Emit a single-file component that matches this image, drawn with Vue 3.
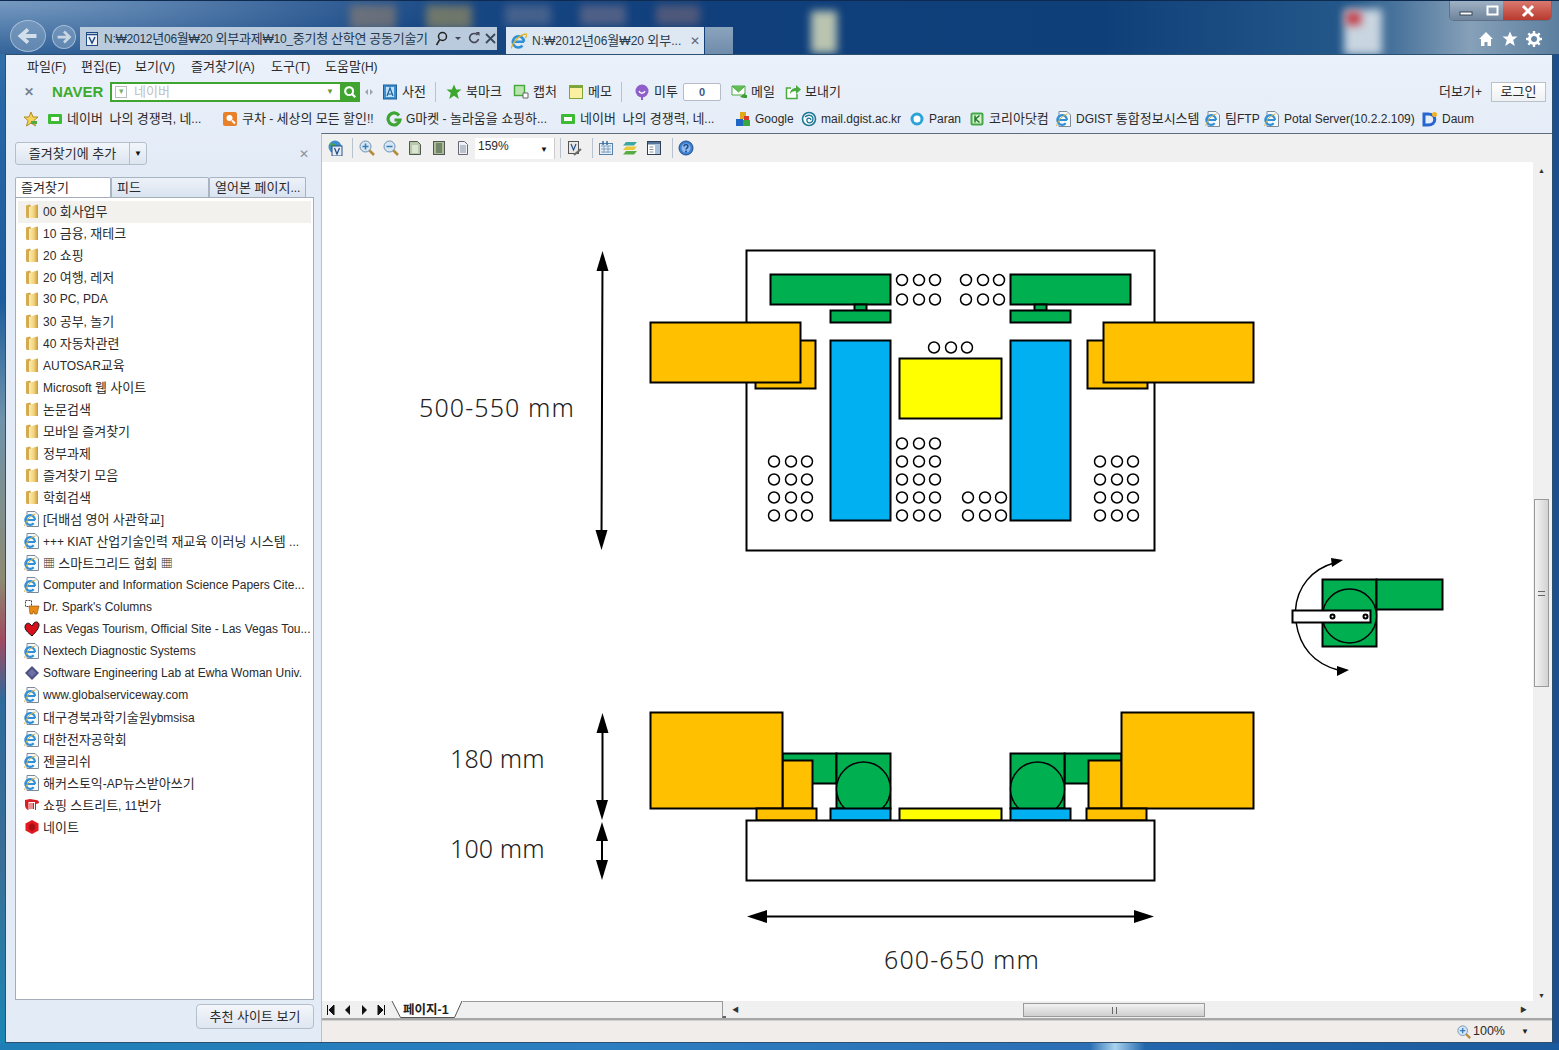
<script setup>
const runs = s => s.split(/([\uAC00-\uD7A3]+)/).filter(Boolean).map(t => ({ t, ko: /[\uAC00-\uD7A3]/.test(t) }))

const withWidths = (items, end) =>
  items.map((it, i) => ({ ...it, w: (i + 1 < items.length ? items[i + 1].x : end) - it.x }))

const menus = [
  { t: '파일(F)', w: 54 }, { t: '편집(E)', w: 54 }, { t: '보기(V)', w: 56 },
  { t: '즐겨찾기(A)', w: 80 }, { t: '도구(T)', w: 54 }, { t: '도움말(H)', w: 60 }
]

const naverTools = withWidths([
  { x: 382, i: 'dict', t: '사전' }, { x: 435, sep: true },
  { x: 446, i: 'gstar', t: '북마크' }, { x: 513, i: 'capture', t: '캡처' },
  { x: 568, i: 'memo', t: '메모' }, { x: 621, sep: true },
  { x: 634, i: 'me2', t: '미투' }, { x: 683, count: '0' },
  { x: 731, i: 'gmail', t: '메일' }, { x: 785, i: 'send', t: '보내기' }
], 845)

const favs = withWidths([
  { x: 23, i: 'favstar' },
  { x: 47, i: 'nv', t: '네이버  나의 경쟁력, 네...' },
  { x: 222, i: 'coupang', t: '쿠차 - 세상의 모든 할인!!' },
  { x: 386, i: 'gm', t: 'G마켓 - 놀라움을 쇼핑하...' },
  { x: 560, i: 'nv', t: '네이버  나의 경쟁력, 네...' },
  { x: 735, i: 'google', t: 'Google' },
  { x: 801, i: 'atom', t: 'mail.dgist.ac.kr' },
  { x: 909, i: 'paran', t: 'Paran' },
  { x: 969, i: 'kor', t: '코리아닷컴' },
  { x: 1056, i: 'ie', t: 'DGIST 통합정보시스템' },
  { x: 1205, i: 'ie', t: '팀FTP' },
  { x: 1264, i: 'ie', t: 'Potal Server(10.2.2.109)' },
  { x: 1422, i: 'daum', t: 'Daum' }
], 1490)

const docTools = withWidths([
  { x: 327, i: 'vglobe' }, { x: 352, sep: true }, { x: 359, i: 'zin' }, { x: 383, i: 'zout' },
  { x: 407, i: 'pg1' }, { x: 431, i: 'pg2' }, { x: 455, i: 'pg3' }, { x: 475, select: '159%' },
  { x: 560, sep: true }, { x: 566, i: 'vpen' }, { x: 592, sep: true }, { x: 598, i: 'cal' },
  { x: 622, i: 'layers' }, { x: 646, i: 'panel' }, { x: 672, sep: true }, { x: 678, i: 'help' }
], 700)

const favorites = [
  ['folder', '00 회사업무'], ['folder', '10 금융, 재테크'], ['folder', '20 쇼핑'], ['folder', '20 여행, 레저'],
  ['folder', '30 PC, PDA'], ['folder', '30 공부, 놀기'], ['folder', '40 자동차관련'], ['folder', 'AUTOSAR교육'],
  ['folder', 'Microsoft 웹 사이트'], ['folder', '논문검색'], ['folder', '모바일 즐겨찾기'], ['folder', '정부과제'],
  ['folder', '즐겨찾기 모음'], ['folder', '학회검색'], ['ie', '[더배섬 영어 사관학교]'],
  ['ie', '+++ KIAT 산업기술인력 재교육 이러닝 시스템 ...'], ['ie', '▦ 스마트그리드 협회 ▦'],
  ['ie', 'Computer and Information Science Papers Cite...'], ['spark', "Dr. Spark's Columns"],
  ['heart', 'Las Vegas Tourism, Official Site - Las Vegas Tou...'], ['ie', 'Nextech Diagnostic Systems'],
  ['diamond', 'Software Engineering Lab at Ewha Woman Univ.'], ['ie', 'www.globalserviceway.com'],
  ['ie', '대구경북과학기술원ybmsisa'], ['ie', '대한전자공학회'], ['ie', '젠글리쉬'],
  ['ie', '해커스토익-AP뉴스받아쓰기'], ['st11', '쇼핑 스트리트, 11번가'], ['nate', '네이트']
]

const box = (c, x1, y1, x2, y2) => ({ c, x: x1, y: y1, w: x2 - x1, h: y2 - y1 })

const topShapes = [
  box('white', 746.5, 250.5, 1154.5, 550.5),
  box('green', 770.5, 274.5, 890.5, 304.5), box('green', 854.5, 304.5, 866.5, 310.5), box('green', 830.5, 310.5, 890.5, 322.5),
  box('green', 1010.5, 274.5, 1130.5, 304.5), box('green', 1034.5, 304.5, 1046.5, 310.5), box('green', 1010.5, 310.5, 1070.5, 322.5),
  box('orange', 755.5, 340.5, 815.5, 388.5), box('orange', 650.5, 322.5, 800.5, 382.5),
  box('orange', 1087.5, 340.5, 1147.5, 388.5), box('orange', 1103.5, 322.5, 1253.5, 382.5),
  box('blue', 830.5, 340.5, 890.5, 520.5), box('blue', 1010.5, 340.5, 1070.5, 520.5),
  box('yellow', 899.5, 358.5, 1001.5, 418.5)
]

const dots = (xs, ys) => ys.flatMap(y => xs.map(x => ({ x, y })))
const holes = [
  ...dots([902, 919, 935], [280, 299.5]), ...dots([966, 983, 999], [280, 299.5]),
  ...dots([934, 951, 967], [347.5]),
  ...dots([902, 919, 935], [443.5, 461.5, 479.5, 497.5, 515.5]),
  ...dots([774, 791, 807], [461.5, 479.5, 497.5, 515.5]),
  ...dots([968, 985, 1001], [497.5, 515.5]),
  ...dots([1100, 1117, 1133], [461.5, 479.5, 497.5, 515.5])
]

const sideBack = [
  box('green', 782.5, 753.5, 836.5, 783.5), box('green', 836.5, 753.5, 890.5, 808.5),
  box('green', 1064.5, 753.5, 1121.5, 783.5), box('green', 1010.5, 753.5, 1064.5, 808.5)
]
const sideFront = [
  box('orange', 782.5, 760.5, 812.5, 808.5), box('orange', 650.5, 712.5, 782.5, 808.5),
  box('orange', 1088.5, 760.5, 1121.5, 808.5), box('orange', 1121.5, 712.5, 1253.5, 808.5),
  box('orange', 756.5, 808.5, 816.5, 820.5), box('orange', 1086.5, 808.5, 1146.5, 820.5),
  box('blue', 830.5, 808.5, 890.5, 820.5), box('blue', 1010.5, 808.5, 1070.5, 820.5),
  box('yellow', 899.5, 808.5, 1001.5, 820.5), box('white', 746.5, 820.5, 1154.5, 880.5)
]
const arrowHeads = [
  '602.5,251 596.5,271 608.5,271', '601.5,550 595.5,530 607.5,530',
  '602.5,713 596.5,733 608.5,733', '602,820 596,800 608,800',
  '602,822 596,841 608,841', '602,880 596,860 608,860',
  '747,916.5 767,910 767,923', '1154,916.5 1134,910 1134,923',
  '1343,560 1331,558 1332,567', '1349,670 1337,666 1337,676'
]
const labels = [
  { t: '500-550 mm', x: 419, y: 417, wide: true }, { t: '180 mm', x: 450, y: 768 },
  { t: '100 mm', x: 450, y: 858 }, { t: '600-650 mm', x: 884, y: 969, wide: true }
]
</script>

<template>
  <div class="window">
    <svg class="sprite" aria-hidden="true">
      <defs>
        <linearGradient id="g-folder" x1="0" x2="1" y1="0" y2="0"><stop offset="0" stop-color="#fbeeb0"/><stop offset=".55" stop-color="#f2d27a"/><stop offset="1" stop-color="#c9983a"/></linearGradient>
        <symbol id="i-folder" viewBox="0 0 16 16"><path d="M2 2.500l4-1 1 1.500v12H3l-1-1z" fill="#d6aa4e"/><path d="M5 4l8-2.500c.5 0 1 .5 1 1V15H5z" fill="url(#g-folder)"/></symbol>
        <symbol id="i-ie" viewBox="0 0 16 16"><path d="M3 .500h8l3.500 3.500v11.500H3z" fill="#f6f9fc" stroke="#7d8b99"/><path d="M1.500 9h9.500M11 9a4.800 4.800 0 1 0-1.300 3.300" fill="none" stroke="#2f8fd6" stroke-width="2.200"/><path d="M.500 15c2-6 6-11 11-12" fill="none" stroke="#d8b440" stroke-width="1"/></symbol>
        <symbol id="i-iebig" viewBox="0 0 16 16"><path d="M2 8.800h11M13 8.800a5.600 5.600 0 1 0-1.500 3.900" fill="none" stroke="#2f8fd6" stroke-width="2.500"/><path d="M0 15.500C2 9 8 2 15 1c1.500 0 .5 3-1 4" fill="none" stroke="#e3b52c" stroke-width="1.300"/></symbol>
        <symbol id="i-vdoc" viewBox="0 0 16 16"><rect x="2.500" y="1.500" width="11" height="13" fill="#eef2f7" stroke="#1f4a86"/><path d="M2.500 3.500h11" stroke="#1f4a86" stroke-width="1.500"/><path d="M5 6l3 6 3-6" fill="none" stroke="#1f4a86" stroke-width="1.500"/></symbol>
        <symbol id="i-spark" viewBox="0 0 16 16"><path d="M1.500 1.500h6v6h-6z" fill="#fff" stroke="#444" stroke-dasharray="2 1"/><path d="M5 7h10l-2 8h-2.500l-1-3-1 3H6z" fill="#e88a14" stroke="#8a4d08" stroke-width=".6"/></symbol>
        <symbol id="i-heart" viewBox="0 0 16 16"><path d="M8 15C3 11 1 8.500 1 6c0-3 3-5 5-3l2 2 2-3c2-2 5-1 5 2s-3 7-7 11z" fill="#d8101c" stroke="#111"/></symbol>
        <symbol id="i-diamond" viewBox="0 0 16 16"><path d="M8 1l7 7-7 7-7-7z" fill="#4b4f82"/><path d="M4 8h8M8 4v8M6 6h4v4H6z" stroke="#7f83b4" fill="none" stroke-width=".8"/></symbol>
        <symbol id="i-st11" viewBox="0 0 16 16"><path d="M1 3l5-1 6 1c2 0 3 1 3 3l-3 1v6H4c-2-1-3-3-3-5z" fill="#d81f26"/><rect x="4.500" y="5" width="6.500" height="8" fill="#fff"/><path d="M6 6v6M8 6v6M9.500 6v6" stroke="#d81f26"/></symbol>
        <symbol id="i-nate" viewBox="0 0 16 16"><path d="M8 1l6.500 3.500v7L8 15l-6.500-3.500v-7z" fill="#e3191f"/><path d="M5 6l3-2 3 2v4l-3 2-3-2z" fill="#a80f14"/></symbol>
        <symbol id="i-nv" viewBox="0 0 16 16"><rect x="1" y="3" width="14" height="10" rx="1" fill="#3dbb34"/><rect x="4" y="6" width="8" height="4" fill="#fff"/></symbol>
        <symbol id="i-coupang" viewBox="0 0 16 16"><rect x="1" y="1" width="14" height="14" rx="2" fill="#e8802a"/><circle cx="7.500" cy="7" r="3" fill="#fff"/><path d="M10 9.500l3 3" stroke="#fff" stroke-width="2"/></symbol>
        <symbol id="i-gm" viewBox="0 0 16 16"><path d="M13 4.500A6 6 0 1 0 14 9H8.500" fill="none" stroke="#3da532" stroke-width="3.200"/></symbol>
        <symbol id="i-google" viewBox="0 0 16 16"><rect x="1" y="8" width="7" height="7" fill="#1f66c4"/><rect x="8" y="9" width="7" height="6" fill="#3aa640"/><rect x="5" y="1" width="6" height="7" fill="#e0a81c"/><rect x="9" y="5" width="5" height="4" fill="#d83a2c"/></symbol>
        <symbol id="i-atom" viewBox="0 0 16 16"><circle cx="8" cy="8" r="6.500" fill="#fff" stroke="#1c7896" stroke-width="1.600"/><path d="M4 6c3-3 8-2 8 2s-5 5-6 2 3-4 4-1" fill="none" stroke="#1c7896" stroke-width="1.300"/></symbol>
        <symbol id="i-paran" viewBox="0 0 16 16"><circle cx="8" cy="8" r="5" fill="#fff" stroke="#2ba3d8" stroke-width="3"/></symbol>
        <symbol id="i-kor" viewBox="0 0 16 16"><rect x="1.500" y="1.500" width="13" height="13" rx="2" fill="#45a94a"/><rect x="3.500" y="3.500" width="9" height="9" fill="#d6f0cf"/><path d="M6 4.500v7M10.500 4.500L6.500 8l4 3.500" fill="none" stroke="#217a29" stroke-width="1.500"/></symbol>
        <symbol id="i-daum" viewBox="0 0 16 16"><path d="M2 3h4c9 0 9 11 0 11H2z" fill="none" stroke="#2566d0" stroke-width="3"/><circle cx="12.500" cy="3.500" r="2.500" fill="#f4b11e"/></symbol>
        <symbol id="i-favstar" viewBox="0 0 16 16"><path d="M8 1l2 5h5l-4 3.500L12.500 15 8 12l-4.500 3L5 9.500 1 6h5z" fill="#f3d35a" stroke="#b58d1f"/><path d="M8 10h6v3H8z" fill="#54a845"/></symbol>
        <symbol id="i-dict" viewBox="0 0 16 16"><rect x="1.500" y="1" width="13" height="14" fill="#3b8fd0" stroke="#1d5f96"/><rect x="4" y="3" width="8" height="10" fill="#bfe0f7"/><path d="M5 12l3-8 3 8M6 10h4" fill="none" stroke="#1d5f96" stroke-width="1.200"/></symbol>
        <symbol id="i-gstar" viewBox="0 0 16 16"><path d="M8 .500l2.200 5h5.300l-4.300 3.600L12.800 15 8 11.800 3.200 15l1.600-5.900L.500 5.500h5.300z" fill="#3da62e"/></symbol>
        <symbol id="i-capture" viewBox="0 0 16 16"><rect x="1.500" y="1.500" width="10" height="10" fill="#b9e4ae" stroke="#46a63a" stroke-width="1.400"/><path d="M10 9h5v5h-5z" fill="#fff" stroke="#666"/></symbol>
        <symbol id="i-memo" viewBox="0 0 16 16"><rect x="1.500" y="1.500" width="13" height="13" fill="#faf0a0" stroke="#7ea43c"/><path d="M1.500 3h13" stroke="#7ea43c" stroke-width="2"/></symbol>
        <symbol id="i-me2" viewBox="0 0 16 16"><circle cx="8" cy="7" r="6.500" fill="#8f5ecb"/><path d="M8 13v3" stroke="#8f5ecb" stroke-width="2"/><path d="M5 7c1 3 5 3 6 0" fill="none" stroke="#fff" stroke-width="1.300"/></symbol>
        <symbol id="i-gmail" viewBox="0 0 16 16"><path d="M1 2h13v9H1z" fill="#fff" stroke="#4aa93f"/><path d="M1 2l6.500 6L14 2" fill="#63bb55" stroke="#4aa93f"/><path d="M9 13l5-4v2h2v3h-3" fill="#3d9c33"/></symbol>
        <symbol id="i-send" viewBox="0 0 16 16"><path d="M6 4H1.500v10.500H12V10" fill="#fff" stroke="#4aa93f" stroke-width="1.500"/><path d="M5 10c0-4 3-6 6-6V1l5 4.500-5 4.500V7c-3 0-5 1-6 3z" fill="#4aa93f"/></symbol>
        <symbol id="i-vglobe" viewBox="0 0 16 16"><circle cx="8" cy="7" r="6.500" fill="#3d8ecb"/><path d="M3 3c3 1 5 0 6 3s-4 3-5 1z" fill="#4fa63f"/><rect x="5" y="6" width="10" height="10" fill="#e9eef5" stroke="#27508a"/><path d="M7.500 8l2.500 6 2.500-6" fill="none" stroke="#27508a" stroke-width="1.300"/></symbol>
        <symbol id="i-zin" viewBox="0 0 16 16"><path d="M10 10l5 5" stroke="#b58b3a" stroke-width="2.500"/><circle cx="6.500" cy="6.500" r="5.500" fill="#d5e6f5" stroke="#6f8fac"/><path d="M3.500 6.500h6M6.500 3.500v6" stroke="#3a7ab8" stroke-width="1.500"/></symbol>
        <symbol id="i-zout" viewBox="0 0 16 16"><path d="M10 10l5 5" stroke="#b58b3a" stroke-width="2.500"/><circle cx="6.500" cy="6.500" r="5.500" fill="#d5e6f5" stroke="#6f8fac"/><path d="M3.500 6.500h6" stroke="#3a7ab8" stroke-width="1.500"/></symbol>
        <symbol id="i-pg1" viewBox="0 0 16 16"><path d="M2.500 1.500h8l3 3v10h-11z" fill="#b8c9a8" stroke="#555"/><path d="M5 6h6M5 8h6M5 10h6M5 12h6" stroke="#fff"/></symbol>
        <symbol id="i-pg2" viewBox="0 0 16 16"><rect x="2.500" y="1.500" width="11" height="13" fill="#a9bd98" stroke="#555"/><path d="M5 4h6M5 6h6M5 8h6M5 10h6M5 12h6" stroke="#40503a"/></symbol>
        <symbol id="i-pg3" viewBox="0 0 16 16"><path d="M3.500 1.500h6l3 3v10h-9z" fill="#eef1f5" stroke="#667"/><path d="M5 6h6M5 8h6M5 10h6M5 12h6" stroke="#8a93a0"/></symbol>
        <symbol id="i-vpen" viewBox="0 0 16 16"><rect x="2.500" y="1.500" width="10" height="12" fill="#e8e8e8" stroke="#555"/><path d="M5 4l2.500 6L10 4" fill="none" stroke="#27508a" stroke-width="1.200"/><path d="M8 15l7-6" stroke="#6b6b6b" stroke-width="2"/></symbol>
        <symbol id="i-cal" viewBox="0 0 16 16"><rect x="1.500" y="3.500" width="13" height="11" fill="#e6eff8" stroke="#5681aa"/><path d="M3 6h10M3 9h10M3 12h10M6 6v7M10 6v7" stroke="#7f9fc0"/><path d="M5 1v4M9 1v4" stroke="#3a6b99" stroke-width="1.500"/></symbol>
        <symbol id="i-layers" viewBox="0 0 16 16"><path d="M4 2h11l-3 3.500H1z" fill="#3ea6a0"/><path d="M4 6.500h11l-3 3.500H1z" fill="#e9c93a"/><path d="M4 11h11l-3 3.500H1z" fill="#58ad42"/></symbol>
        <symbol id="i-panel" viewBox="0 0 16 16"><rect x="1.500" y="1.500" width="13" height="13" fill="#fff" stroke="#333f55"/><rect x="2" y="2" width="12" height="2.500" fill="#53749b"/><rect x="9" y="4" width="5" height="10" fill="#a8c2dc"/><path d="M3.500 7h4M3.500 9.500h4M3.500 12h4" stroke="#8895a5"/></symbol>
        <symbol id="i-help" viewBox="0 0 16 16"><circle cx="8" cy="8" r="7" fill="#3f7fd0" stroke="#1d4f93"/><circle cx="8" cy="8" r="4.500" fill="#8cb9eb"/><path d="M6 6.500c0-2.500 4-2.500 4 0 0 1.500-2 1.500-2 3" fill="none" stroke="#123f82" stroke-width="1.400"/><circle cx="8" cy="11.500" r=".9" fill="#123f82"/></symbol>
      </defs>
    </svg>

    <header class="titlebar">
      <i class="blob b1"></i><i class="blob b2"></i><i class="blob b3"></i><i class="blob b4"></i><i class="blob b5"></i><i class="blob b6"></i><i class="blob b7"></i><i class="blob b8"></i>
      <button class="nav back"><svg viewBox="0 0 36 30" width="36" height="30"><path d="M27 15H12M18 8l-8 7 8 7" fill="none" stroke="#d2deea" stroke-width="4"/></svg></button>
      <button class="nav fwd"><svg viewBox="0 0 24 24" width="24" height="24"><path d="M5 12h12M12 6l6 6-6 6" fill="none" stroke="#c9d6e4" stroke-width="3"/></svg></button>
      <div class="address">
        <svg class="ico"><use href="#i-vdoc"/></svg>
        <span class="addr-text"><span v-for="(r, n) in runs('N:₩2012년06월₩20 외부과제₩10_중기청 산학연 공동기술기')" :key="n" :class="{ ko: r.ko }">{{ r.t }}</span></span>
        <svg viewBox="0 0 66 23" width="66" height="23" class="addr-btns"><circle cx="11.500" cy="9.500" r="4" fill="none" stroke="#222" stroke-width="1.500"/><path d="M8.500 13l-3 5" stroke="#222" stroke-width="1.500"/><path d="M24 10h6l-3 3z" fill="#445"/><path d="M46.500 8a4.500 4.500 0 1 0 1 4" fill="none" stroke="#445" stroke-width="1.600"/><path d="M44.500 5h4v4z" fill="#445"/><path d="M55 7l9 9M64 7l-9 9" stroke="#3a4a5a" stroke-width="1.800"/></svg>
      </div>
      <div class="tab active">
        <svg class="ico"><use href="#i-iebig"/></svg>
        <span><span v-for="(r, n) in runs('N:₩2012년06월₩20 외부...')" :key="n" :class="{ ko: r.ko }">{{ r.t }}</span></span>
        <span class="tab-x">✕</span>
      </div>
      <div class="tab newtab"></div>
      <div class="title-right">
        <div class="caption">
          <span class="cap min"><svg viewBox="0 0 32 20" width="32" height="20"><rect x="10" y="11" width="12" height="3" fill="#fff" stroke="#345"/></svg></span>
          <span class="cap max"><svg viewBox="0 0 21 20" width="21" height="20"><rect x="5.500" y="5.500" width="10" height="8" fill="none" stroke="#fff" stroke-width="2"/></svg></span>
          <span class="cap close"><svg viewBox="0 0 50 20" width="50" height="20"><path d="M20 5l10 10M30 5L20 15" stroke="#fff" stroke-width="3"/></svg></span>
        </div>
        <div class="title-icons">
          <svg viewBox="0 0 16 16" width="16" height="16"><path d="M8 1l7 7h-2v7H9.500v-4h-3v4H3V8H1z" fill="#fff"/></svg>
          <svg viewBox="0 0 16 16" width="16" height="16"><path d="M8 .500l2.200 5h5.300l-4.300 3.600L12.800 15 8 11.800 3.200 15l1.600-5.900L.500 5.500h5.300z" fill="#fff"/></svg>
          <svg viewBox="0 0 16 16" width="16" height="16"><circle cx="8" cy="8" r="4.500" fill="none" stroke="#fff" stroke-width="3"/><path d="M8 0v3M8 13v3M0 8h3M13 8h3M2.300 2.300l2 2M11.700 11.700l2 2M13.700 2.300l-2 2M4.300 11.700l-2 2" stroke="#fff" stroke-width="2.400"/></svg>
        </div>
      </div>
    </header>

    <main class="panel">
      <nav class="menubar">
        <span v-for="m in menus" :key="m.t" :style="{ width: m.w + 'px' }"><span v-for="(r, n) in runs(m.t)" :key="n" :class="{ ko: r.ko }">{{ r.t }}</span></span>
      </nav>

      <div class="naverbar">
        <span class="nv-close">✕</span>
        <span class="nv-logo">NAVER</span>
        <div class="nv-search">
          <span class="nv-check">▾</span>
          <span class="nv-input ko">네이버</span>
          <span class="nv-drop">▼</span>
          <span class="nv-go"><svg viewBox="0 0 16 16" width="14" height="14"><circle cx="7" cy="7" r="4.500" fill="none" stroke="#fff" stroke-width="2.400"/><path d="M10 10l4 4" stroke="#fff" stroke-width="2.600"/></svg></span>
        </div>
        <span class="nv-grip"><svg viewBox="0 0 10 10" width="10" height="10"><path d="M4 2L1 5l3 3zM6 2l3 3-3 3z" fill="#9aa4ae"/></svg></span>
        <template v-for="it in naverTools" :key="it.x">
          <span v-if="it.sep" class="tool" :style="{ width: it.w + 'px' }"><i class="sep"></i></span>
          <span v-else-if="it.count" class="tool" :style="{ width: it.w + 'px' }"><b class="counter">{{ it.count }}</b></span>
          <span v-else class="tool" :style="{ width: it.w + 'px' }"><svg class="ico"><use :href="'#i-' + it.i"/></svg><span class="ko">{{ it.t }}</span></span>
        </template>
        <span class="nv-more"><span class="ko">더보기</span>+</span>
        <span class="nv-login ko">로그인</span>
      </div>

      <div class="favbar">
        <span v-for="f in favs" :key="f.x" class="tool" :style="{ width: f.w + 'px' }"><svg class="ico"><use :href="'#i-' + f.i"/></svg><span v-if="f.t" class="txt"><span v-for="(r, n) in runs(f.t)" :key="n" :class="{ ko: r.ko }">{{ r.t }}</span></span></span>
      </div>

      <div class="main">
        <aside class="sidebar">
          <div class="side-top">
            <div class="add-btn"><span class="add-label ko">즐겨찾기에 추가</span><span class="add-arrow">▼</span></div>
            <span class="side-x">✕</span>
          </div>
          <div class="side-tabs">
            <span class="s-tab on ko">즐겨찾기</span>
            <span class="s-tab mid ko">피드</span>
            <span class="s-tab last"><span class="ko">열어본 페이지</span>...</span>
          </div>
          <ul class="fav-list">
            <li v-for="(f, n) in favorites" :key="n" :class="{ hot: n === 0 }">
              <svg class="ico"><use :href="'#i-' + f[0]"/></svg><span class="txt"><span v-for="(r, k) in runs(f[1])" :key="k" :class="{ ko: r.ko }">{{ r.t }}</span></span>
            </li>
          </ul>
          <div class="side-bottom"><span class="reco ko">추천 사이트 보기</span></div>
        </aside>

        <section class="doc">
          <div class="doc-toolbar">
            <template v-for="d in docTools" :key="d.x">
              <span v-if="d.sep" class="tool" :style="{ width: d.w + 'px' }"><i class="sep"></i></span>
              <span v-else-if="d.select" class="tool" :style="{ width: d.w + 'px' }"><span class="zoom-select">{{ d.select }}<em>▼</em></span></span>
              <span v-else class="tool" :style="{ width: d.w + 'px' }"><svg class="ico"><use :href="'#i-' + d.i"/></svg></span>
            </template>
          </div>

          <div class="canvas-row">
            <svg class="canvas" viewBox="322 162 1211 839" width="1211" height="839">
              <g class="parts">
                <rect v-for="(s, n) in topShapes" :key="'t' + n" :class="s.c" :x="s.x" :y="s.y" :width="s.w" :height="s.h"/>
                <circle v-for="(h, n) in holes" :key="'h' + n" class="white hole" :cx="h.x" :cy="h.y" r="5.500"/>
                <rect v-for="(s, n) in sideBack" :key="'b' + n" :class="s.c" :x="s.x" :y="s.y" :width="s.w" :height="s.h"/>
                <circle class="green hole" cx="863.500" cy="789" r="27"/>
                <circle class="green hole" cx="1037.500" cy="789" r="27"/>
                <rect v-for="(s, n) in sideFront" :key="'f' + n" :class="s.c" :x="s.x" :y="s.y" :width="s.w" :height="s.h"/>
              </g>
              <g class="parts">
                <path class="line thin" d="M1334 563C1312 569 1297 587 1295.500 610"/>
                <path class="line thin" d="M1296 622C1300 649 1316 664 1338 670"/>
                <rect class="green" x="1322.500" y="579.500" width="54" height="67"/>
                <rect class="green" x="1376.500" y="579.500" width="66" height="30"/>
                <circle class="green hole" cx="1349.500" cy="616" r="27"/>
                <rect class="white" x="1292.500" y="610.500" width="78" height="12"/>
                <circle class="white" cx="1332.500" cy="616.500" r="2"/>
                <circle class="white" cx="1365.500" cy="616.500" r="2"/>
              </g>
              <g>
                <path class="line" d="M602.500 262L601.500 540M602.500 725V808M602 832V870M757 916.500H1144"/>
                <polygon v-for="(p, n) in arrowHeads" :key="'a' + n" class="head" :points="p"/>
              </g>
              <text v-for="l in labels" :key="l.t" class="dim" :class="{ wide: l.wide }" :x="l.x" :y="l.y">{{ l.t }}</text>
            </svg>
            <div class="vscroll">
              <span class="arrow">▲</span>
              <div class="vthumb"><i></i></div>
              <span class="arrow bottom">▼</span>
            </div>
          </div>

          <div class="sheetbar">
            <div class="sheet-nav">
              <svg viewBox="0 0 9 10" width="9" height="10"><path d="M1.500 0v10M8 0v10L3 5z" stroke="#111" fill="#111"/></svg>
              <svg viewBox="0 0 9 10" width="9" height="10"><path d="M7 0v10L2 5z" fill="#111"/></svg>
              <svg viewBox="0 0 9 10" width="9" height="10"><path d="M2 0v10l5-5z" fill="#111"/></svg>
              <svg viewBox="0 0 9 10" width="9" height="10"><path d="M7.500 0v10M1 0v10l5-5z" stroke="#111" fill="#111"/></svg>
            </div>
            <svg class="sheet-tab" viewBox="0 0 72 17" width="72" height="17">
              <path d="M1 0l8.500 16.500h54L71 0" fill="#fff" stroke="#555"/>
              <text x="12" y="13">페이지-1</text>
            </svg>
            <div class="sheet-rest"></div>
            <i class="split"></i>
            <div class="hscroll">
              <span class="h-arrow">◀</span>
              <div class="hthumb"><i></i></div>
              <span class="h-arrow right">▶</span>
            </div>
          </div>

          <footer class="status">
            <svg class="ico small"><use href="#i-zin"/></svg>
            <span class="status-zoom">100%</span>
            <span class="status-arrow">▼</span>
          </footer>
        </section>
      </div>
    </main>
    <div class="bottom-frame"></div>
  </div>
</template>

<style>
html, body { margin: 0; padding: 0; }
</style>

<style scoped>
.window {
  width: 1559px; height: 1050px; display: flex; flex-direction: column; overflow: hidden; position: relative;
  font: 12px/1 "Liberation Sans", "Noto Sans CJK KR", sans-serif; color: #2a2a2a;
  background:
    linear-gradient(90deg, rgba(0,0,0,0) 1553px, #1c4f8c 1553px),
    linear-gradient(180deg, #3d78ad 0, #2868a6 100px, #1c5c9c 300px, #6f93aa 420px, #8d8a72 580px, #a04a60 640px, #2e6a9c 700px, #3a6f96 860px, #1b86b4 1040px);
}
.ko { font-size: 13px; }
.sprite { position: absolute; width: 0; height: 0; }
.ico { width: 16px; height: 16px; flex: none; }
.ico.small { width: 14px; height: 14px; }
.sep { display: block; width: 1px; height: 20px; background: #b8c2ce; }
.txt { white-space: pre; }

.titlebar {
  height: 54px; box-sizing: border-box; padding-left: 10px; display: flex; align-items: flex-end; position: relative; flex: none;
  background:
    radial-gradient(ellipse 460px 60px at 0 0, rgba(170,195,222,.6), rgba(170,195,222,0)),
    linear-gradient(90deg, #2a5c94 0, #1c4c88 300px, #103f7c 700px, #0f3f78 1100px, #24588a 1350px, #86a0b8 1470px, #5c7f9f 1559px);
  border-top: 1px solid #0e2a4f;
}
.blob { position: absolute; filter: blur(4px); }
.b1 { left: 350px; top: 4px; width: 46px; height: 24px; background: rgba(150,130,110,.6); }
.b2 { left: 426px; top: 4px; width: 46px; height: 24px; background: rgba(170,150,90,.6); }
.b3 { left: 505px; top: 4px; width: 46px; height: 20px; background: rgba(110,120,150,.55); }
.b4 { left: 580px; top: 4px; width: 46px; height: 20px; background: rgba(130,120,140,.55); }
.b5 { left: 656px; top: 4px; width: 44px; height: 20px; background: rgba(130,110,120,.55); }
.b6 { left: 811px; top: 10px; width: 26px; height: 42px; background: #b9c4b0; }
.b7 { left: 1344px; top: 8px; width: 38px; height: 46px; background: #c9d5e0; }
.b8 { left: 1346px; top: 11px; width: 15px; height: 13px; background: #c23a44; }
.nav { padding: 0; border: 1px solid rgba(220,235,250,.5); border-radius: 50%; display: flex; align-items: center; justify-content: center; position: relative; background: rgba(140,170,200,.5); }
.back { width: 36px; height: 32px; margin-bottom: 2px; }
.fwd { width: 24px; height: 24px; margin: 0 4px 5px 6px; }
.address {
  width: 417px; height: 23px; margin-bottom: 4px; display: flex; align-items: center; gap: 4px; padding-left: 4px; box-sizing: border-box; position: relative;
  background: #b9cbdd; color: #24384d; white-space: nowrap; overflow: hidden; flex: none;
}
.addr-text { width: 327px; flex: none; line-height: 16px; letter-spacing: -.25px; }
.addr-btns { flex: none; margin-left: -4px; }
.tab { height: 27px; box-sizing: border-box; position: relative; display: flex; align-items: center; flex: none; }
.tab.active { width: 198px; margin-left: 9px; padding-left: 5px; gap: 5px; background: #dde8f3; color: #2a3a4a; white-space: nowrap; }
.tab-x { margin-left: auto; margin-right: 4px; color: #667; }
.newtab { width: 28px; margin-left: 1px; background: linear-gradient(180deg, #8ba4bd, #6f8cab); }
.title-right { margin-left: auto; width: 110px; height: 53px; display: flex; flex-direction: column; position: relative; flex: none; }
.caption { display: flex; height: 20px; width: 103px; border: 1px solid #5e7188; border-top: 0; border-radius: 0 0 5px 5px; overflow: hidden; box-sizing: border-box; }
.cap { display: block; }
.min, .max { background: linear-gradient(180deg, #9fb1c4, #6f859c); }
.min { width: 32px; } .max { width: 21px; }
.close { flex: 1; background: linear-gradient(180deg, #d9796e, #b93a2e); }
.title-icons { display: flex; gap: 8px; margin: 10px 0 0 29px; }

.panel { flex: 1; min-height: 0; margin: 0 6px 0 5px; border: 1px solid #2c5070; display: flex; flex-direction: column; background: linear-gradient(180deg, #eaf1fa, #e3ebf7 120px); position: relative; }
.menubar { height: 24px; box-sizing: border-box; padding-bottom: 2px; flex: none; display: flex; align-items: center; padding-left: 21px; }
.menubar > span { white-space: nowrap; flex: none; }
.naverbar { height: 25px; flex: none; display: flex; align-items: center; padding-left: 18px; padding-right: 6px; white-space: nowrap; }
.nv-close { width: 28px; color: #77828e; font-weight: bold; }
.nv-logo { width: 58px; color: #3cab2c; font: bold 15px "Liberation Sans", sans-serif; }
.nv-search { width: 250px; height: 20px; box-sizing: border-box; border: 2px solid #3fa52f; display: flex; align-items: center; background: #fff; }
.nv-check { width: 12px; height: 12px; margin-left: 3px; border: 1px solid #bbb; font-size: 9px; color: #7ab06f; text-align: center; box-sizing: border-box; }
.nv-input { margin-left: 7px; color: #c0c0c0; }
.nv-drop { margin-left: auto; margin-right: 6px; font-size: 8px; color: #6a9a3a; }
.nv-go { width: 20px; height: 20px; margin-right: -2px; background: #3fa52f; display: flex; align-items: center; justify-content: center; }
.nv-grip { width: 22px; display: flex; padding-left: 4px; box-sizing: border-box; }
.tool { display: flex; align-items: center; gap: 4px; flex: none; white-space: pre; overflow: hidden; height: 100%; }
.counter { width: 38px; height: 18px; box-sizing: border-box; border: 1px solid #b5bcc5; background: #fff; font: bold 11px/16px "Liberation Sans", sans-serif; color: #3b5a85; text-align: center; border-radius: 2px; }
.nv-more { margin-left: auto; margin-right: 9px; }
.nv-login { width: 55px; height: 20px; box-sizing: border-box; border: 1px solid #b9c1ca; background: linear-gradient(180deg, #fff, #eef0f3); text-align: center; line-height: 18px; }
.favbar { height: 29px; flex: none; display: flex; align-items: center; padding-left: 17px; }

.main { flex: 1; min-height: 0; display: flex; }
.sidebar { width: 315px; flex: none; box-sizing: border-box; padding: 9px 7px 13px 9px; display: flex; flex-direction: column; }
.side-top { display: flex; align-items: center; justify-content: space-between; height: 23px; flex: none; padding-right: 0; }
.add-btn { width: 132px; height: 23px; box-sizing: border-box; border: 1px solid #b4bfcc; border-radius: 3px; display: flex; align-items: center; background: linear-gradient(180deg, #f2f6fb, #dde5ef); }
.add-label { width: 113px; text-align: center; white-space: nowrap; border-right: 1px solid #b4bfcc; line-height: 21px; }
.add-arrow { flex: 1; text-align: center; font-size: 8px; color: #111; }
.side-x { color: #8a939d; font-size: 12px; margin-right: 5px; }
.side-tabs { display: flex; margin-top: 12px; height: 20px; flex: none; }
.s-tab { box-sizing: border-box; height: 20px; border: 1px solid #a9b4c2; border-bottom: 0; padding: 3px 0 0 5px; white-space: nowrap; background: linear-gradient(180deg, #edf2f9, #d9e3f0); border-radius: 2px 2px 0 0; }
.s-tab.on { width: 96px; background: #fff; }
.s-tab.mid { width: 98px; }
.s-tab.last { width: 97px; }
.fav-list { list-style: none; margin: 0; padding: 3px 2px; flex: 1; min-height: 0; background: #fff; border: 1px solid #a4adb8; box-sizing: border-box; }
.fav-list li { height: 22px; box-sizing: border-box; padding-bottom: 2px; display: flex; align-items: center; gap: 3px; padding-left: 6px; white-space: nowrap; overflow: hidden; }
.fav-list li.hot { background: #f3f1ee; }
.side-bottom { display: flex; justify-content: flex-end; margin-top: 4px; flex: none; }
.reco { width: 118px; height: 25px; box-sizing: border-box; border: 1px solid #b4bfcc; border-radius: 4px; background: linear-gradient(180deg, #f3f6fb, #dfe6f0); text-align: center; line-height: 24px; }

.doc { flex: 1; min-width: 0; display: flex; flex-direction: column; border-top: 1px solid #5e6b78; background: #f0f0f0; box-sizing: border-box; border-left: 1px solid #b8c2ce; }
.doc-toolbar { height: 28px; flex: none; display: flex; align-items: center; padding-left: 5px; }
.doc-toolbar .tool { gap: 0; }
.zoom-select { width: 80px; height: 21px; box-sizing: border-box; background: #fff; border-right: 1px solid #ccc; padding: 2px 0 0 3px; position: relative; display: block; }
.zoom-select em { position: absolute; right: 6px; top: 7px; font: normal 8px "Liberation Sans", sans-serif; color: #111; }
.canvas-row { height: 839px; flex: none; display: flex; }
.canvas { display: block; flex: none; background: #fff; }
.parts rect, .parts circle { stroke: #000; stroke-width: 2; }
.parts .hole { stroke-width: 1.500; }
.green { fill: #00b050; }
.orange { fill: #ffc000; }
.blue { fill: #00b0f0; }
.yellow { fill: #ffff00; }
.white { fill: #fff; }
.line { fill: none; stroke: #000; stroke-width: 2; }
.line.thin { stroke-width: 1.500; }
.head { fill: #000; }
.dim { font: 300 25px "Noto Sans", "Liberation Sans", sans-serif; fill: #222; letter-spacing: .1px; }
.dim.wide { letter-spacing: 1.100px; }
.vscroll { flex: 1; display: flex; flex-direction: column; align-items: flex-start; padding-left: 1px; }
.arrow { width: 15px; height: 18px; text-align: center; font-size: 7px; line-height: 18px; color: #333; }
.arrow.bottom { margin-top: auto; height: 14px; }
.vthumb { width: 15px; height: 188px; margin-top: 319px; box-sizing: border-box; border: 1px solid #9a9a9a; background: linear-gradient(90deg, #f4f4f4, #d2d2d2); display: flex; align-items: center; justify-content: center; }
.vthumb i { width: 7px; height: 5px; border-top: 1px solid #666; border-bottom: 1px solid #666; box-sizing: border-box; }
.sheetbar { height: 19px; flex: none; display: flex; align-items: flex-start; background: #f0f0f0; border-bottom: 2px solid #a6a6a6; box-sizing: border-box; }
.sheet-nav { width: 69px; display: flex; gap: 8px; padding: 4px 0 0 4px; box-sizing: border-box; flex: none; }
.sheet-tab { flex: none; }
.sheet-tab text { font: bold 12.500px "Liberation Sans", "Noto Sans CJK KR", sans-serif; fill: #222; }
.sheet-rest { width: 259px; height: 0; border-top: 1px solid #9a9a9a; flex: none; }
.split { width: 4px; height: 17px; flex: none; border-left: 1px solid #999; border-bottom: 2px solid #666; box-sizing: border-box; }
.hscroll { flex: 1; display: flex; align-items: flex-start; padding-top: 2px; }
.h-arrow { width: 11px; font-size: 7px; line-height: 14px; color: #333; margin-left: 4px; text-align: center; }
.h-arrow.right { margin-left: 313px; }
.hthumb { width: 182px; height: 14px; margin-left: 282px; box-sizing: border-box; border: 1px solid #9a9a9a; background: linear-gradient(180deg, #f2f2f2, #cfcfcf); display: flex; align-items: center; justify-content: center; flex: none; }
.hthumb i { width: 5px; height: 7px; border-left: 1px solid #666; border-right: 1px solid #666; box-sizing: border-box; }
.status { height: 22px; flex: none; display: flex; align-items: center; justify-content: flex-end; background: #f0edea; border-top: 1px solid #cfcfcf; box-sizing: border-box; padding-right: 24px; }
.status-zoom { margin: 0 0 0 2px; width: 48px; font-size: 12.500px; }
.status-arrow { font-size: 8px; color: #222; width: 7px; }
.bottom-frame { height: 7px; flex: none; background: linear-gradient(90deg, #1f7eb6 0, #2b7ec0 600px, #2b6fb4 1090px, #a9d2ee 1115px, #2267ac 1145px, #1a5a9c 1559px); }
</style>
